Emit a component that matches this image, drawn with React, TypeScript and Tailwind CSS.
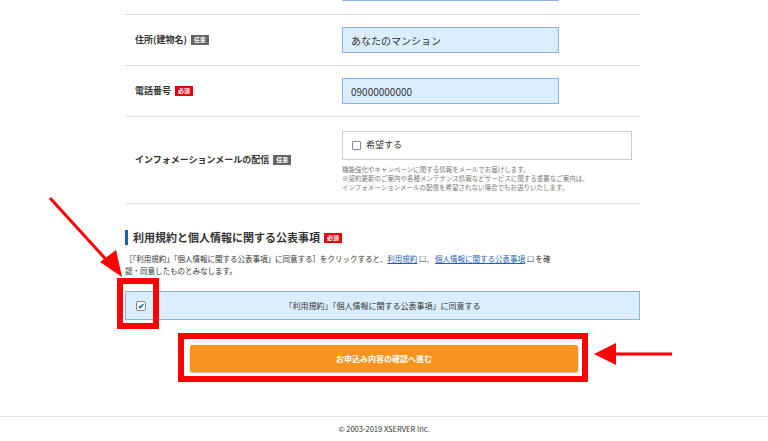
export default function App() {
  const f = { fontFamily: '"Noto Sans CJK JP", "Noto Sans", sans-serif' };
  const Tag = ({ req }: { req?: boolean }) => (
    <span className={`ml-1 inline-block px-[3px] text-[6px] leading-[10px] font-bold text-white ${req ? 'bg-[#e60012]' : 'bg-[#666]'}`}>{req ? '必須' : '任意'}</span>
  );
  return (
    <div className="relative w-[768px] h-[441px] bg-white overflow-hidden text-[#333]" style={f}>
      <div className="mx-auto w-[515px] ml-[125px]">
        <div className="h-[15px] relative border-b border-[#ddd]">
          <div className="absolute left-[217px] top-[-10px] w-[217px] h-[11px] bg-[#dbeeff] border border-[#8ab4e6]" />
        </div>
        <div className="h-[51px] flex items-center border-b border-[#ddd]">
          <div className="w-[217px] pl-[10px] text-[9px] font-bold flex items-center">住所(建物名)<Tag /></div>
          <div className="w-[217px] h-[26px] bg-[#dbeeff] border border-[#8ab4e6] flex items-center px-[8px] text-[10px]">あなたのマンション</div>
        </div>
        <div className="h-[51px] flex items-center border-b border-[#ddd]">
          <div className="w-[217px] pl-[10px] text-[9px] font-bold flex items-center">電話番号<Tag req /></div>
          <div className="w-[217px] h-[26px] bg-[#dbeeff] border border-[#8ab4e6] flex items-center px-[8px] text-[10px]">09000000000</div>
        </div>
        <div className="h-[87px] flex items-center border-b border-[#ddd]">
          <div className="w-[217px] pl-[10px] text-[9px] font-bold flex items-center">インフォメーションメールの配信<Tag /></div>
          <div className="pt-[2px]">
            <div className="w-[290px] h-[29px] border border-[#ccc] flex items-center px-[9px] text-[9px]">
              <span className="inline-block w-[9px] h-[9px] border border-[#888] rounded-[1px] mr-[5px]" />希望する
            </div>
            <div className="mt-[5px] text-[6.5px] leading-[9px] text-[#777]">
              機能強化やキャンペーンに関する情報をメールでお届けします。<br />
              ※契約更新のご案内や各種メンテナンス情報などサービスに関する重要なご案内は、<br />
              インフォメーションメールの配信を希望されない場合でもお送りいたします。
            </div>
          </div>
        </div>
        <div className="mt-[26px] flex items-center border-l-[3px] border-[#1f5fb4] pl-[5px] h-[15px] text-[11px] font-bold">利用規約と個人情報に関する公表事項<Tag req /></div>
        <div className="mt-[8px] text-[7.5px] leading-[12px]">
          ［「利用規約」「個人情報に関する公表事項」に同意する］をクリックすると、<span className="text-[#1f5fb4] underline">利用規約</span> ☐、 <span className="text-[#1f5fb4] underline">個人情報に関する公表事項</span> ☐ を確<br />認・同意したものとみなします。
        </div>
        <div className="mt-[14px] h-[29px] bg-[#dbeeff] border border-[#8ab4e6] flex items-center relative">
          <span className="absolute left-[10px] w-[10px] h-[10px] bg-white border border-[#888] rounded-[2px] flex items-center justify-center text-[8px] text-[#1f5fb4] font-bold leading-none">✔</span>
          <div className="w-full text-center text-[8px]">「利用規約」「個人情報に関する公表事項」に同意する</div>
        </div>
        <div className="mt-[25px] ml-[65px] w-[388px] h-[27px] bg-[#f7941d] rounded-[2px] shadow-[0_1px_2px_rgba(0,0,0,0.3)] flex items-center justify-center text-white text-[8px] font-bold">お申込み内容の確認へ進む</div>
      </div>
      <div className="absolute left-0 right-0 top-[416px] border-t border-[#ddd] h-[25px] flex items-center justify-center text-[7.5px] text-[#333]">© 2003-2019 XSERVER Inc.</div>
      {/* annotations */}
      <div className="absolute left-[117px] top-[278px] w-[42px] h-[51px] border-[6px] border-[#f00]" />
      <div className="absolute left-[178px] top-[333px] w-[410px] h-[49px] border-[6px] border-[#f00]" />
      <svg className="absolute left-0 top-0" width="768" height="441">
        <line x1="50" y1="198" x2="112" y2="266" stroke="#f00" strokeWidth="3" />
        <polygon points="122,277 100,262 116,250" fill="#f00" />
        <line x1="672" y1="354" x2="610" y2="354" stroke="#f00" strokeWidth="3" />
        <polygon points="594,354 616,343 616,365" fill="#f00" />
      </svg>
    </div>
  );
}
